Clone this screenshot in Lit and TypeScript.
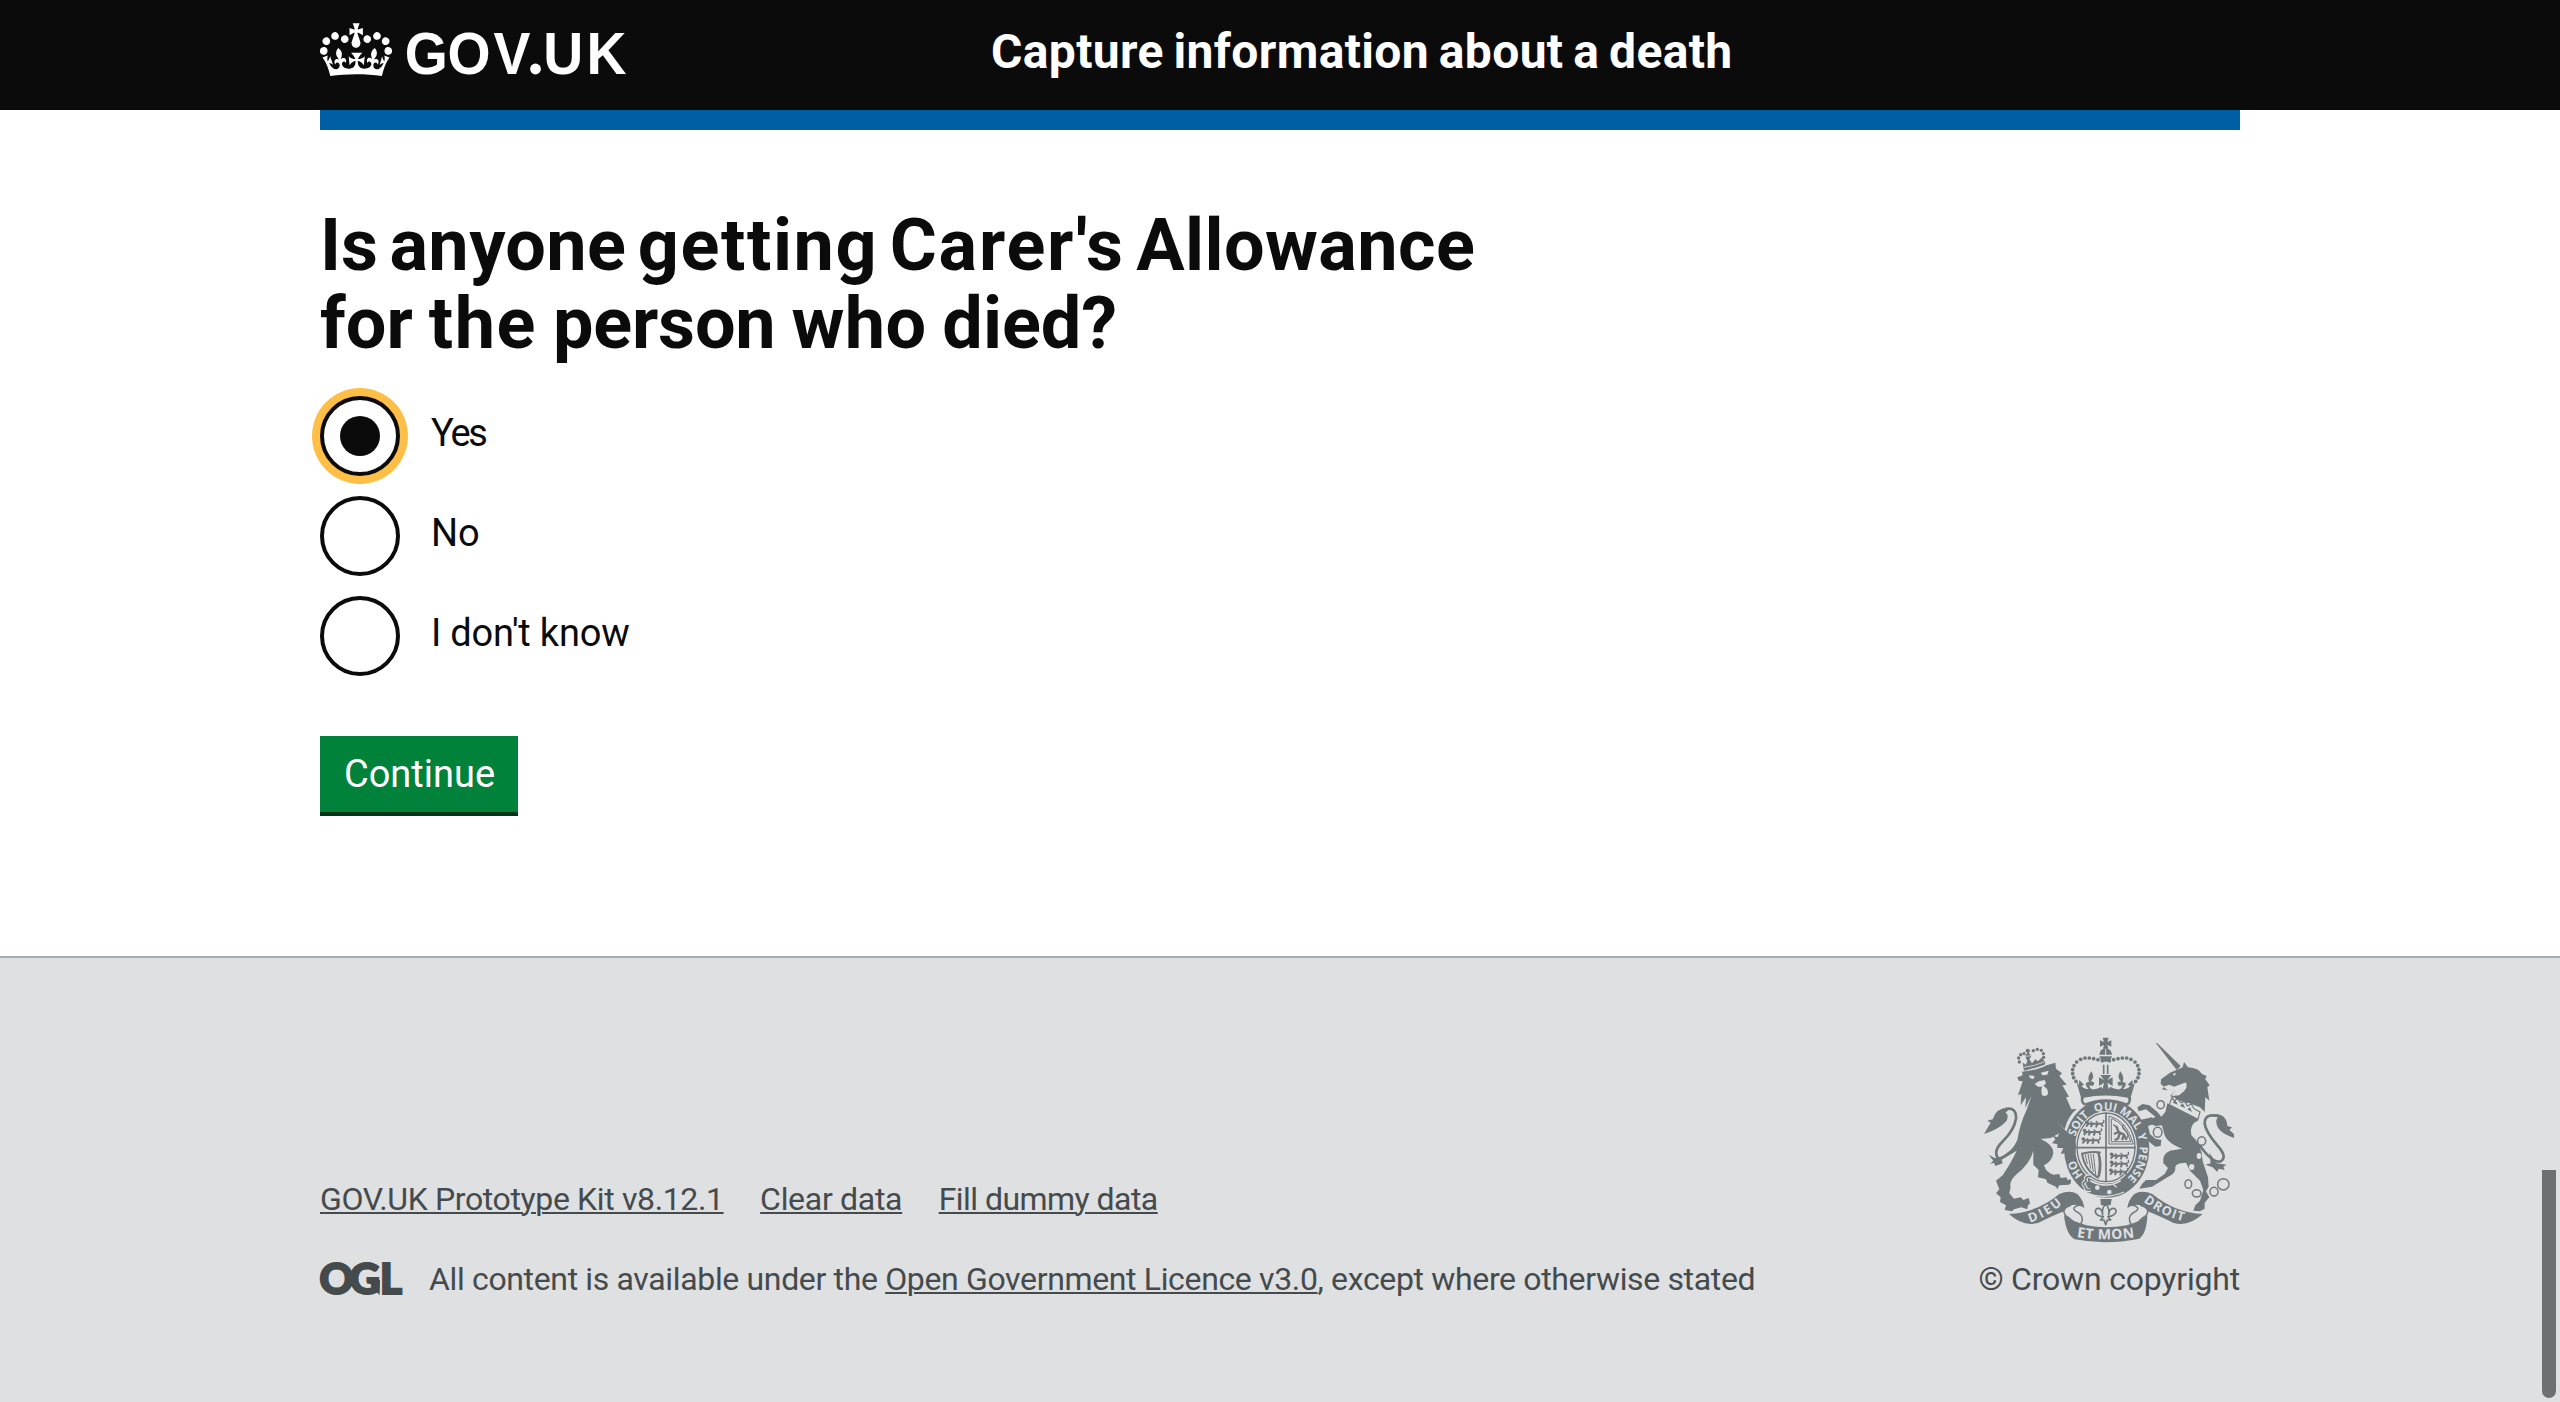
import { LitElement, html, css, svg } from "lit";
import { customElement, property, state } from "lit/decorators.js";

@customElement("gov-logo")
class GovLogo extends LitElement {
  static styles = css`
    :host { display: block; width: 310px; height: 104px; }
    svg { display: block; overflow: visible; }
    .word { font: 700 59px "Liberation Sans", Arial, sans-serif; fill: #fff; }
  `;
  render() {
    return html`<svg width="310" height="104" viewBox="0 0 310 104" role="img" aria-label="GOV.UK">
      <svg x="0" y="23.2" width="72" height="52.8" viewBox="0 4.2 35.6 25.8" preserveAspectRatio="none">
        <path fill="#fff" d="M6.7 12.2c1 .4 2.1-.1 2.5-1s-.1-2.1-1-2.5c-1-.4-2.1.1-2.5 1-.4 1 0 2.1 1 2.5m-4.3 2.5c1 .4 2.1-.1 2.5-1s-.1-2.1-1-2.5c-1-.4-2.1.1-2.5 1-.5 1 0 2.1 1 2.5m-1.3 4.8c1 .4 2.1-.1 2.5-1 .4-1-.1-2.1-1-2.5-1-.4-2.1.1-2.5 1-.4 1 0 2.1 1 2.5m10.4-5.8c1 .4 2.1-.1 2.5-1s-.1-2.1-1-2.5c-1-.4-2.1.1-2.5 1s0 2.1 1 2.5m17.4-1.5c-1 .4-2.1-.1-2.5-1s.1-2.1 1-2.5c1-.4 2.1.1 2.5 1 .5 1 0 2.1-1 2.5m4.3 2.5c-1 .4-2.1-.1-2.5-1s.1-2.1 1-2.5c1-.4 2.1.1 2.5 1 .5 1 0 2.1-1 2.5m1.3 4.8c-1 .4-2.1-.1-2.5-1-.4-1 .1-2.1 1-2.5 1-.4 2.1.1 2.5 1 .4 1 0 2.1-1 2.5m-10.4-5.8c-1 .4-2.1-.1-2.5-1s.1-2.1 1-2.5c1-.4 2.1.1 2.5 1s0 2.1-1 2.5m-5.3-4.9 2.4 1.3V6.5l-2.4.8c-.1-.1-.1-.1-.2-.1s1-3 1-3h-3.4l1 3c-.1.1-.2.1-.2.1-.1.1-2.4-.7-2.4-.7v3.5L17 8.8c-.1.1 0 .2.1.3l-1.4 4.2c-.1.2-.1.4-.1.7 0 1.1.8 2.1 1.9 2.2h.6C19.2 16 20 15.1 20 14c0-.2 0-.4-.1-.7l-1.4-4.2c.2-.1.3-.2.3-.3m-1 20.3c4.6 0 8.9.3 12.8.9 1.1-4.6 2.4-7.2 3.8-9.1l-2.6-.9c.3 1.3.3 1.9 0 2.8-.4-.4-.8-1.2-1.1-2.4l-1.2 4.2c.8-.5 1.4-.9 2-.9-1.2 2.6-2.7 3.2-3.6 3-1.2-.2-1.7-1.3-1.5-2.2.3-1.3 1.6-1.6 2.2-.1 1.2-2.4-.8-3.1-2.1-2.4 1.9-1.9 2.2-3.6.6-5.7-2.2 1.7-2.2 3.3-1.2 5.6-1.3-1.5-3.3-.7-2.5 1.7.9-1.4 2.1-.5 2 .8-.2 1.2-1.7 2.1-3.7 2-2.8-.2-3-2.2-3-3.7.7-.1 1.9.5 3 2l.4-4.4c-1.1 1.2-2.2 1.4-3.3 1.4.4-1.2 2.1-3.1 2.1-3.1h-5.5s1.8 2 2.1 3.1c-1.1 0-2.2-.2-3.3-1.4l.4 4.4c1.1-1.5 2.3-2.1 3-2-.1 1.6-.2 3.5-3 3.7-1.9.2-3.5-.8-3.7-2-.2-1.3 1-2.2 1.9-.8.7-2.4-1.3-3.1-2.6-1.7 1-2.3 1-4-1.2-5.6-1.6 2.1-1.3 3.8.6 5.7-1.3-.7-3.2 0-2.1 2.4.6-1.5 1.9-1.1 2.2.1.2.9-.4 1.9-1.5 2.2-1 .2-2.4-.5-3.7-3 .7 0 1.3.4 2 .9L5 20.4c-.3 1.2-.7 1.9-1.2 2.4-.3-.8-.2-1.5 0-2.8l-2.6.9C2.7 22.8 4 25.4 5.1 30c3.8-.5 8.2-.9 12.7-.9"/>
      </svg>
      <g transform="translate(84.8 0) scale(.938 1)">
        <text class="word" y="74" x="0 45.5 94.5">GOV</text>
        <text class="word" y="74" x="147.6 193.6">UK</text>
      </g>
      <circle cx="215.5" cy="69" r="5.4" fill="#fff"/>
    </svg>`;
  }
}

@customElement("ogl-mark")
class OglMark extends LitElement {
  static styles = css`
    :host { display: block; width: 109px; height: 40px; }
    svg { display: block; overflow: visible; }
    .mark { font: 900 42px/40px Lato, "Liberation Sans", sans-serif; fill: #454a4c; stroke: #454a4c; stroke-width: 2.2; }
  `;
  render() {
    return html`<svg width="109" height="40" viewBox="0 -2 109 40" role="img" aria-label="OGL">
      <text class="mark" y="33" x="-0.5 29.5 60">OGL</text>
      <polygon fill="#454a4c" points="47.5,19 60,19 59.6,34 55,29.5"/>
    </svg>`;
  }
}

/** Royal arms: lion, garter with crown, unicorn and the motto ribbon. */
@customElement("royal-arms")
class RoyalArms extends LitElement {
  static styles = css`
    :host { display: block; width: 250px; height: 208px; }
    svg { display: block; }
    .f { fill: #6f777b; }
    .b { fill: #dee0e2; }
    .s { fill: none; stroke: #6f777b; }
    .l { fill: none; stroke: #dee0e2; }
    .motto { font: 700 34px "Open Sans", "Noto Sans", sans-serif; fill: #dee0e2; }
    .ribbon { font: 700 38px "Open Sans", "Noto Sans", sans-serif; fill: #dee0e2; }
    .wide { font-size: 42px; }
  `;

  private halfCrown() {
    const beads = [[397, 122], [384, 119], [371, 116], [358, 114], [345, 114], [332, 118], [320, 126], [312, 137], [308, 149], [308, 161], [311, 173], [318, 184]];
    return svg`
      ${beads.map(([x, y]) => svg`<circle class="f" cx=${x} cy=${y} r="5.6"/>`)}
      <path class="f" d="M317,178 L334,236 H408 V207 Q396,208 394,200 Q384,206 372,208 Q360,210 358,196 L368,198 Q380,186 362,184 Q376,172 364,154 Q350,172 358,186 Q342,186 350,200 L356,206 Q344,210 334,198 L342,194 L328,180 L326,196 Z"/>
    `;
  }

  private crown() {
    return svg`
      <path class="f" d="M398,53 H416 L412,66 L424,61 V80 L412,75 L415,86 H399 L402,75 L390,80 V61 L402,66 Z"/>
      <path class="f" d="M388,104 A19,19 0 0 1 426,104 Z"/>
      <path class="f" d="M388,109 H426 Q422,124 407,126 Q392,124 388,109 Z"/>
      <path class="l" stroke-width="3" d="M407,88 V105"/>
      <path class="s" stroke-width="5" d="M401,134 V162 M413,134 V162"/>
      <path class="f" d="M391,165 H424 L412,180 L428,172 V198 L412,188 L416,208 H398 L402,188 L387,198 V172 L402,180 Z"/>
      ${this.halfCrown()}
      <g transform="translate(815 0) scale(-1 1)">${this.halfCrown()}</g>
      <path class="f" d="M338,226 Q407,214 477,226 L484,236 Q482,252 474,256 H342 Q332,250 332,236 Z"/>
      <path class="b" d="M342,233 Q407,220 473,233 Q479,242 470,250 Q407,226 346,250 Q336,244 342,233 Z"/>
    `;
  }

  private passant(x: number, y: number) {
    return svg`<g transform="translate(${x} ${y})">
      <path class="s" stroke-width="6" stroke-linejoin="round" d="M8,9 H52 M14,9 L6,18 M26,10 L20,19 M40,10 L36,20 M52,8 L56,18"/>
      <path class="s" stroke-width="4" d="M52,8 Q64,6 58,-2 M4,2 L12,6 M20,2 L24,8 M36,1 L42,8"/>
      <circle class="f" cx="9" cy="5" r="5.5"/>
    </g>`;
  }

  private shield() {
    return svg`
      <ellipse class="b" cx="410" cy="384" rx="136" ry="155"/>
      <ellipse class="f" cx="410" cy="385" rx="128" ry="148"/>
      <ellipse class="b" cx="408" cy="382" rx="93" ry="109"/>
      <ellipse class="s" cx="408" cy="382" rx="87" ry="103" stroke-width="4"/>
      <path class="s" stroke-width="5" d="M408,280 V486 M319,383 H497"/>
      ${[[342, 302], [335, 327], [331, 352]].map(([x, y]) => this.passant(x, y))}
      ${[[416, 398], [416, 422], [414, 446]].map(([x, y]) => this.passant(x, y))}
      <path class="s" stroke-width="3" d="M417,288 V372 H490 M424,296 V365 H484 M417,288 Q470,300 490,372 M426,296 Q466,312 482,364"/>
      <path class="s" stroke-width="7" stroke-linejoin="round" d="M438,318 L446,336 L462,344 L470,360 M446,336 L432,342 M450,338 L444,356 L434,360 M462,346 L456,360"/>
      <path class="s" stroke-width="4" d="M468,356 Q482,346 464,330 Q452,318 462,314 M430,314 L444,324"/>
      <path class="s" stroke-width="6" d="M336,398 Q342,450 386,474 M334,402 Q366,392 392,398"/>
      <path class="f" d="M388,396 Q400,430 390,470 L382,470 Q390,430 382,400 Z"/>
      <path class="s" stroke-width="3" d="M346,404 L352,432 M354,402 L362,446 M362,402 L370,456 M370,402 L377,464"/>
      <path class="f" d="M340,484 Q400,512 470,480 L478,510 Q430,548 352,512 Z"/>
      <path class="l" stroke-width="5" d="M360,482 Q412,508 452,482"/>
      <path class="l" stroke-width="4" d="M428,492 L440,502 M352,520 Q405,540 462,516"/>
      <circle class="b" cx="382" cy="503" r="7"/><circle class="b" cx="418" cy="516" r="7"/>
      <path class="l" stroke-width="12" d="M366,470 Q344,464 348,482 Q334,490 346,500 Q346,514 362,510"/>
      <path class="s" stroke-width="5" d="M366,470 Q342,466 348,484 Q332,490 346,500 Q344,514 366,508 M350,488 H364"/>
    `;
  }

  private motto() {
    const words: [string, number][] = [["HO", 43], ["SOIT", 109], ["QUI", 161], ["MAL", 200], ["Y", 247], ["PENSE", 267]];
    return svg`
      <path id="garter" fill="none" pathLength="360" d="M410,499 A99,114 0 0 1 410,271 A99,114 0 0 1 410,499"/>
      ${words.map(([t, o]) => svg`<text class="motto"><textPath href="#garter" startOffset=${o}>${t}</textPath></text>`)}
    `;
  }

  private lion() {
    return svg`
      <path class="l" stroke-width="10" d="M262,306 Q285,330 290,352"/>
      <path class="f" d="M142,172 L158,166 L156,155 Q205,150 230,136 L256,128 L258,146 L276,160 L268,168 L290,194 L277,196 L297,230 L288,232 L304,268 L320,267 Q294,288 284,328 L256,304 Q282,328 304,346 Q318,362 318,378 L316,402 L306,412 L300,400 L290,412 L286,400 L272,402 L280,384 L262,384 L262,372 L246,370 L256,358 L246,346 L262,352 L268,340 L242,354 L212,357 Q250,374 250,398 Q246,425 222,436 Q228,458 250,464 L268,462 L272,474 L290,472 L292,480 L302,478 Q306,492 296,494 L268,496 L262,508 L258,500 L232,488 L228,478 L204,472 L206,450 L190,434 L190,392 Q180,432 138,464 Q116,486 122,500 L118,520 L132,536 L152,532 L160,540 L176,534 L180,550 L174,556 L172,568 L154,562 L132,568 L126,574 L104,570 L108,556 L90,546 L92,532 L78,520 L88,508 L78,482 L98,466 Q128,420 140,392 L80,428 L66,424 L92,416 Q130,390 142,360 Q150,310 170,270 L184,228 L166,264 L168,232 L152,256 L154,222 L144,226 L158,184 L146,182 Z"/>
      <path class="b" d="M212,158 L236,152 L232,164 L218,166 Z M176,166 L194,168 L190,178 L180,174 Z"/>
      <path class="b" d="M194,192 L206,184 L224,180 L228,190 L220,198 Q236,206 234,222 Q228,232 216,226 Q212,212 216,200 L204,200 Z"/>
      <path class="f" d="M158,128 L168,134 L172,122 L166,110 L184,108 L178,118 L186,130 L196,118 L204,124 L216,112 L226,128 L224,134 Q190,146 162,152 Z"/>
      <path class="l" stroke-width="2.5" d="M162,142 Q196,138 222,126"/>
      <path class="f" d="M170,86 L178,88 L180,94 L176,100 L184,106 L166,108 L172,98 L166,94 Z"/>
      ${[[148, 126], [146, 114], [152, 104], [162, 101], [190, 92], [202, 88], [214, 91], [220, 101], [221, 112]].map(
        ([x, y]) => svg`<circle class="f" cx=${x} cy=${y} r="5"/>`)}
      <path class="s" stroke-width="8" d="M106,267 Q140,260 138,296 Q132,330 100,362 Q68,392 84,414 Q94,420 146,376"/>
      <path class="f" d="M122,264 Q80,260 68,298 L52,302 L62,308 L42,342 Q90,326 110,302 Q118,282 106,278 Z M56,404 L74,414 L94,414 L98,430 L76,438 L72,428 L60,432 L70,422 Z"/>
    `;
  }

  private unicorn() {
    return svg`
      <path class="f" d="M557,68 L562,70 L632,138 L620,150 Z"/>
      <path class="f" d="M642,126 L654,142 Q686,144 696,162 L710,168 L706,178 L719,196 L712,202 L718,242 L706,232 L704,276 L690,262 L600,228 L624,204 L598,212 L576,208 L582,200 L572,192 L573,178 L600,158 L638,142 Z"/>
      <path class="b" d="M580,200 L598,194 L612,200 L656,184 L654,206 L628,226 L604,228 L618,208 L596,214 Z M608,162 L618,158 L614,168 Z"/>
      <path class="f" d="M640,180 Q660,196 642,214 L616,236 L650,250 L676,230 L676,180 Z"/>
      <path class="b" d="M604,230 L694,274 L686,300 L594,256 Z"/>
      <path class="s" stroke-width="3.5" d="M606,232 L612,242 L622,236 L632,248 L644,244 L652,258 L664,252 L672,266 L690,276 L684,298 L598,254 Z"/>
      <path class="f" d="M608,248 L616,240 L624,254 Z M630,258 L638,250 L646,264 Z M652,268 L660,262 L666,276 Z"/>
      <path class="f" d="M592,250 L686,300 Q656,314 664,346 Q696,372 698,424 L714,472 L716,500 L708,514 L718,532 L704,548 L704,566 L690,574 L670,572 L676,556 L690,542 L700,510 L690,482 L660,452 L648,428 Q612,428 616,448 Q614,462 592,472 L546,500 L508,506 L516,492 L528,480 L558,480 L584,462 L594,444 L580,430 Q576,402 600,392 L636,386 Q586,366 582,338 L576,316 L556,318 Q540,312 542,300 L556,290 L528,268 L506,274 L502,262 L518,252 L538,256 L562,276 L574,290 L586,276 Z"/>
      <path class="f" d="M510,300 L546,292 L562,308 L534,318 L540,342 L556,356 L574,360 L572,378 L556,380 L538,366 L522,344 Z"/>
      <path class="s" stroke-width="8" d="M752,290 Q704,276 704,310 Q706,334 742,376 Q774,412 752,424 Q728,432 686,372"/>
      <path class="f" d="M734,282 Q770,282 772,318 L786,322 L778,330 L792,342 V354 Q744,338 740,312 Q736,300 744,292 Z M718,398 L740,430 L770,434 L760,440 L764,450 L746,446 L742,456 L728,442 L706,434 L722,430 Z"/>
      <g fill="#dee0e2" stroke="#6f777b" stroke-width="4.5">
        <ellipse cx="572" cy="254" rx="11" ry="12"/><ellipse cx="563" cy="337" rx="13" ry="15"/>
        <ellipse cx="695" cy="363" rx="12" ry="13"/><ellipse cx="655" cy="492" rx="10" ry="13"/>
        <ellipse cx="680" cy="520" rx="13" ry="11"/><ellipse cx="732" cy="515" rx="12" ry="13"/>
        <circle cx="760" cy="493" r="17"/>
      </g>
      <ellipse class="b" cx="687" cy="408" rx="7" ry="9"/><ellipse class="b" cx="665" cy="441" rx="8" ry="9"/>
    `;
  }

  private ribbonSide() {
    return svg`
      <path class="f" d="M117,582 Q200,578 268,522 Q300,508 322,522 Q340,540 343,564 Q320,550 304,556 Q282,560 286,572 Q240,590 206,608 Q160,622 117,582 Z"/>
      <path class="b" stroke="#6f777b" stroke-width="4.5" d="M304,556 Q270,566 288,588 Q310,600 308,612 L330,616 Q348,588 318,574 Q306,566 316,560 Q330,552 341,560"/>
    `;
  }

  private ribbon() {
    return svg`
      ${this.ribbonSide()}
      <g transform="translate(815 0) scale(-1 1)">${this.ribbonSide()}</g>
      <path class="f" d="M282,586 Q310,606 350,616 Q407,628 470,616 Q510,606 532,586 Q530,640 508,656 Q407,676 314,658 Q288,644 282,586 Z"/>
      <path id="dieu" fill="none" d="M180,608 Q240,588 286,544"/>
      <path id="etmon" fill="none" d="M320,651 Q407,665 498,651"/>
      <path id="droit" fill="none" d="M520,544 Q580,592 650,606"/>
      <text class="ribbon"><textPath href="#dieu" textLength="112">DIEU</textPath></text>
      <text class="ribbon wide"><textPath href="#etmon" textLength="174">ET MON</textPath></text>
      <text class="ribbon"><textPath href="#droit" textLength="134">DROIT</textPath></text>
      <path class="f" d="M391,537 H425 L422,556 H393 Z"/>
      <path class="b" stroke="#6f777b" stroke-width="5" stroke-linejoin="round" d="M407,552 Q394,566 398,584 Q396,562 380,566 Q370,576 384,586 Q392,590 400,590 L392,600 H402 L407,614 L412,600 H422 L414,590 Q424,590 432,584 Q444,574 434,566 Q418,562 416,584 Q420,566 407,552 Z"/>
    `;
  }

  render() {
    return html`<svg width="250" height="208" viewBox="42 48 750 624" role="img" aria-label="Royal arms">
      ${this.shield()} ${this.unicorn()} ${this.crown()} ${this.motto()} ${this.lion()} ${this.ribbon()}
    </svg>`;
  }
}

@customElement("radio-option")
class RadioOption extends LitElement {
  @property() label = "";
  @property({ type: Boolean }) checked = false;
  static styles = css`
    :host { display: flex; height: 80px; cursor: pointer; color: #0b0b0b; }
    .ring {
      box-sizing: border-box; width: 80px; height: 80px; flex: none;
      border: 4px solid #0b0b0b; border-radius: 50%; background: #fff;
      display: flex; align-items: center; justify-content: center;
    }
    .on { box-shadow: 0 0 0 8px #ffbf47; }
    .dot { width: 40px; height: 40px; border-radius: 50%; background: #0b0b0b; }
    .label { padding: 12px 0 0 31px; font-size: 38px; line-height: 50px; letter-spacing: -0.2px; white-space: nowrap; }
    .on + .label { letter-spacing: -2.2px; }
  `;
  render() {
    return html`<span class="ring ${this.checked ? "on" : ""}">${this.checked ? html`<span class="dot"></span>` : ""}</span><span class="label">${this.label}</span>`;
  }
}

@customElement("app-root")
class AppRoot extends LitElement {
  @state() private choice = 0;
  private options = ["Yes", "No", "I don't know"];

  static styles = css`
    :host {
      display: flex; flex-direction: column; position: relative; width: 100%; height: 1402px; overflow: hidden;
      background: #fff; color: #0b0b0b; font-family: Roboto, "Liberation Sans", sans-serif;
    }
    .wrap { width: 1920px; margin: 0 auto; }
    .header { background: #0b0b0b; height: 110px; flex: none; }
    .header .wrap { display: flex; align-items: center; height: 104px; }
    .title { margin-left: 361px; font-size: 48px; line-height: 60px; font-weight: 700; letter-spacing: 0.35px; word-spacing: -2.5px; color: #fff; white-space: nowrap; }
    .bar { height: 20px; background: #005ea5; }
    .main { height: 846px; flex: none; }
    h1 { margin: 77px 0 0; font-size: 72px; line-height: 78px; font-weight: 700; white-space: nowrap; word-spacing: -6.5px; }
    .second { word-spacing: -2px; }
    .w1 { letter-spacing: 0.4px; }
    .w2 { letter-spacing: 1.6px; }
    .w3 { letter-spacing: 1.8px; }
    .w0 { letter-spacing: -0.2px; }
    .radios { display: flex; flex-direction: column; gap: 20px; margin-top: 33px; }
    .button {
      display: flex; align-items: center; justify-content: center; box-sizing: border-box;
      width: 198px; height: 76px; margin-top: 60px; padding: 0 0 1px 1px; border: 0; border-radius: 0;
      background: #00823b; box-shadow: 0 4px 0 #003618; color: #fff; font: 38px Roboto, sans-serif;
    }
    .footer { flex: 1; border-top: 2px solid #a1acb2; background: #dee0e2; color: #454a4c; font-size: 32px; line-height: 40px; }
    .footer .wrap { display: flex; justify-content: space-between; align-items: flex-end; height: 341px; white-space: nowrap; }
    a { color: inherit; text-decoration: underline; text-decoration-thickness: 2px; text-underline-offset: 2px; }
    .links { display: flex; gap: 36.5px; letter-spacing: -0.37px; }
    .links a:last-child { letter-spacing: -0.55px; }
    .links a:nth-child(2) { letter-spacing: -0.3px; }
    .licence { display: flex; align-items: center; margin-top: 40px; letter-spacing: -0.35px; }
    .crest { display: flex; flex-direction: column; align-items: flex-end; gap: 15px; letter-spacing: -0.2px; }
    .arms { margin-right: 6px; }
    .thumb {
      position: absolute; right: 4px; top: 1170px; width: 14px; height: 228px;
      background: #6e6f70; border-radius: 0 0 7px 7px;
    }
  `;

  render() {
    return html`
      <header class="header"><div class="wrap"><gov-logo></gov-logo><div class="title">Capture information about a death</div></div></header>
      <main class="main wrap">
        <div class="bar"></div>
        <h1>Is <span class="w1">anyone</span> <span class="w2">getting</span> <span class="w3">Carer's</span> <span class="w1">Allowance</span><br /><span class="second">for <span class="w2">the</span> <span class="w0">person</span> <span class="w1">who</span> <span>died?</span></span></h1>
        <div class="radios">
          ${this.options.map((o, i) => html`<radio-option .label=${o} ?checked=${i === this.choice} @click=${() => (this.choice = i)}></radio-option>`)}
        </div>
        <button class="button">Continue</button>
      </main>
      <footer class="footer"><div class="wrap">
        <div>
          <div class="links"><a>GOV.UK Prototype Kit v8.12.1</a><a>Clear data</a><a>Fill dummy data</a></div>
          <div class="licence"><ogl-mark></ogl-mark><span>All content is available under the <a>Open Government Licence v3.0</a>, except where otherwise stated</span></div>
        </div>
        <div class="crest"><royal-arms class="arms"></royal-arms><span>© Crown copyright</span></div>
      </div></footer>
      <div class="thumb"></div>
    `;
  }
}
